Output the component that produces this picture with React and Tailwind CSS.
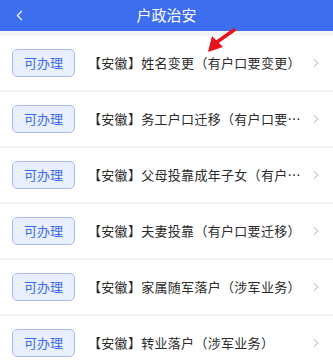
import { ChevronLeft, ChevronRight } from 'lucide-react';

const items = [
    '【安徽】姓名变更（有户口要变更）',
    '【安徽】务工户口迁移（有户口要迁移）',
    '【安徽】父母投靠成年子女（有户口要迁移）',
    '【安徽】夫妻投靠（有户口要迁移）',
    '【安徽】家属随军落户（涉军业务）',
    '【安徽】转业落户（涉军业务）',
];

function Row({ title }) {
    return (
        <div className="flex items-center h-[56px] border-b-2 border-[#f1f2f4] pl-3 pr-[10px] shrink-0">
            <div className="flex items-center justify-center w-[63px] h-[28px] rounded-[5px] border border-[#aabcef] bg-[#e9effd] text-[#3d6be6] text-[13px] shrink-0">
                可办理
            </div>
            <div className="flex-1 min-w-0 ml-[13px] text-[13px] tracking-[0.3px] text-[#2b2b2b] truncate pr-2">{title}</div>
            <ChevronRight className="w-[14px] h-[14px] text-[#9a9a9a] shrink-0" strokeWidth={1.5} />
        </div>
    );
}

export default function App() {
    return (
        <div className="relative w-[333px] h-[360px] overflow-hidden bg-white flex flex-col" style={{ fontFamily: '"Noto Sans CJK SC", "Noto Sans", sans-serif' }}>
            <div className="relative flex items-center justify-center h-[31px] bg-[#3d6ef0] shrink-0">
                <ChevronLeft className="absolute left-[11px] top-[7px] w-[17px] h-[17px] text-white" strokeWidth={1.5} />
                <span className="text-white text-[15px]">户政治安</span>
            </div>
            <div className="h-[5px] bg-[#f4f5f7] shrink-0" />
            {items.map(t => <Row key={t} title={t} />)}
            {/* red pointer arrow */}
            <svg className="absolute left-[200px] top-[26px]" width="40" height="30" viewBox="0 0 40 30">
                <line x1="34" y1="4" x2="17" y2="16" stroke="#e8131b" strokeWidth="3.5" strokeLinecap="round" />
                <polygon points="8,26 12,10 23,21" fill="#e8131b" />
            </svg>
        </div>
    );
}
